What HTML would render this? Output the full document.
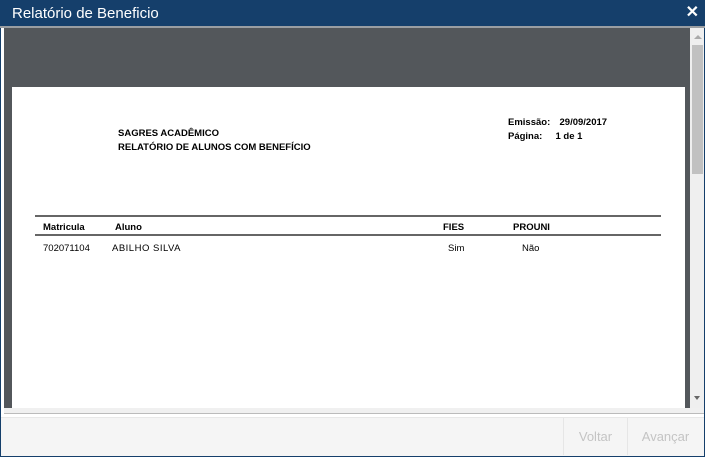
<!DOCTYPE html>
<html><head><meta charset="utf-8"><style>
*{margin:0;padding:0;box-sizing:border-box}
body{width:705px;height:457px;overflow:hidden;background:#fff;font-family:"Liberation Sans",sans-serif;position:relative}
.frame{position:absolute;left:0;top:0;width:705px;height:457px;border:1px solid #153f6b;border-top:none}
.title{position:absolute;left:0;top:0;width:705px;height:26px;background:#153f6b;color:#fff;font-size:15px;padding:5px 0 0 12px}
.close{position:absolute;right:6px;top:2px;font-size:16px;font-weight:bold;color:#fff}
.sep{position:absolute;left:0;top:26px;width:705px;height:2px;background:#9a9ea2}
.dark{position:absolute;left:4px;top:28px;width:686px;height:380px;background:#53575b}
.page{position:absolute;left:12px;top:87px;width:673px;height:321px;background:#fff}
.sb{position:absolute;left:690px;top:28px;width:14px;height:380px;background:#efefef}
.thumb{position:absolute;left:692px;top:45px;width:11px;height:129px;background:#c1c1c1}
.t{position:absolute;font-size:9.5px;color:#000;white-space:nowrap}
.b{font-weight:bold}
.hl{position:absolute;left:35px;width:626px;height:2px;background:#666}
.bottomline{position:absolute;left:4px;top:408px;width:700px;height:6px;background:#f0f0f0;border-bottom:1px solid #bbb}
.footer{position:absolute;left:1px;top:417px;width:703px;height:39px;background:#f5f5f5;border-top:1px solid #e8e8e8}
.btn{position:absolute;top:418px;height:37px;font-size:13px;color:#c4c4c4;padding-top:11px;text-align:center;border-left:1px solid #e6e6e6}
</style></head><body>
<div class="frame"></div>
<div class="title">Relatório de Beneficio<span class="close">✕</span></div>
<div class="sep"></div>
<div class="dark"></div>
<div class="page"></div>
<div class="sb"></div>
<div class="thumb"></div>
<div style="position:absolute;left:694px;top:35px;width:0;height:0;border-left:4px solid transparent;border-right:4px solid transparent;border-bottom:4px solid #aaa"></div>
<div style="position:absolute;left:694px;top:396px;width:0;height:0;border-left:3px solid transparent;border-right:3px solid transparent;border-top:4px solid #666"></div>
<div class="t b" style="left:118px;top:128px">SAGRES ACADÊMICO</div>
<div class="t b" style="left:118px;top:142px">RELATÓRIO DE ALUNOS COM BENEFÍCIO</div>
<div class="t b" style="left:508px;top:117px;word-spacing:2px">Emissão:&nbsp; 29/09/2017</div>
<div class="t b" style="left:508px;top:131px">Página: &nbsp;&nbsp;&nbsp; 1 de 1</div>
<div class="hl" style="top:215px"></div>
<div class="t b" style="left:43px;top:222px">Matricula</div>
<div class="t b" style="left:115px;top:222px">Aluno</div>
<div class="t b" style="left:443px;top:222px">FIES</div>
<div class="t b" style="left:513px;top:222px">PROUNI</div>
<div class="hl" style="top:234px"></div>
<div class="t" style="left:43px;top:243px">702071104</div>
<div class="t" style="left:112px;top:243px;letter-spacing:.5px">ABILHO SILVA</div>
<div class="t" style="left:448px;top:243px">Sim</div>
<div class="t" style="left:522px;top:243px">Não</div>
<div class="bottomline"></div>
<div class="footer"></div>
<div class="btn" style="left:563px;width:64px">Voltar</div>
<div class="btn" style="left:627px;width:76px">Avançar</div>
</body></html>
